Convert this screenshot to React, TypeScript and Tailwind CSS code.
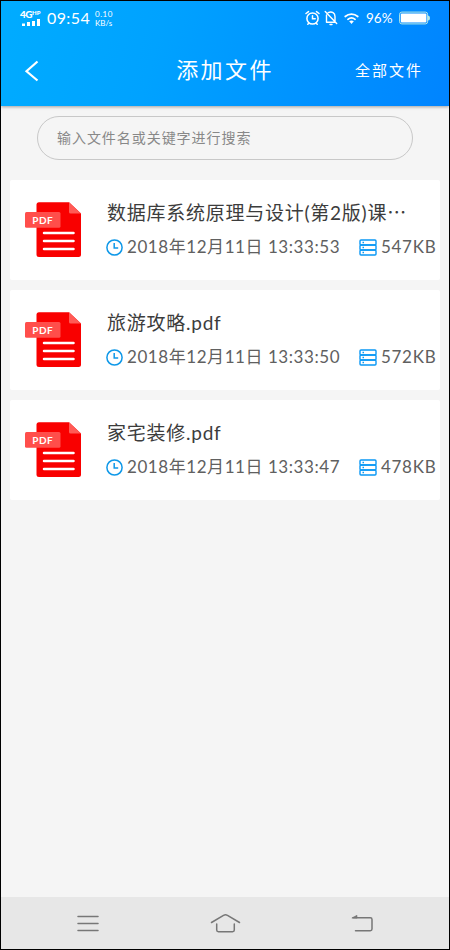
import type { ReactNode } from "react";

const files = [
  { name: "数据库系统原理与设计(第2版)课⋯", time: "13:33:53", size: "547KB" },
  { name: "旅游攻略.pdf", time: "13:33:50", size: "572KB" },
  { name: "家宅装修.pdf", time: "13:33:47", size: "478KB" },
];

function Label({ children, className }: { children: ReactNode; className: string }) {
  return <span className={`whitespace-nowrap font-['Lato','Noto_Sans_CJK_SC',sans-serif] ${className}`}>{children}</span>;
}

function StatusBar() {
  return (
    <div className="flex h-[33px] items-center pl-[19px] pr-[19px] text-white">
      <div className="flex w-[22px] flex-col">
        <div className="flex h-[8px] items-start font-['Lato',sans-serif] font-black leading-[8px]">
          <span className="text-[10px] tracking-[-0.5px]">4G</span>
          <span className="text-[6px] leading-[6px]">HP</span>
        </div>
        <svg className="ml-[1px] mt-[1px] h-[7px] w-5" viewBox="0 0 20 7" fill="currentColor">
          <path d="M1 4.500h3V7H1zM6 3h3v4H6zM11 2h3v5h-3zM16 0h3v7h-3z" />
        </svg>
      </div>
      <Label className="ml-[5px] w-[43px] text-[16px] leading-4 tracking-[0.4px]">09:54</Label>
      <div className="ml-[5px] flex flex-col font-['Lato',sans-serif] text-[8px] leading-[10px] tracking-[0.5px]">
        <span className="h-[9px]">0.10</span>
        <span className="h-[9px] tracking-normal">KB/s</span>
      </div>
      <svg className="ml-auto h-4 w-[15px]" viewBox="0 0 15 16" fill="none" stroke="currentColor" strokeWidth="1.500" strokeLinecap="round">
        <circle cx="7.5" cy="8.5" r="5.6" />
        <path d="M7.5 5.7v3h2.7M1 3.5 3.5 1.6M14 3.5l-2.5-1.9M3.8 13.2l-1 1M11.2 13.2l1 1" />
      </svg>
      <svg className="ml-1 h-4 w-[14px]" viewBox="0 0 14 16" fill="none" stroke="currentColor" strokeWidth="1.4" strokeLinecap="round" strokeLinejoin="round">
        <path d="M4.2 2.6C8 .8 11 3 11 6.5v4.2M2.5 5v7.3h8.4M1.2 1.5l11.5 12M6 14.5h2" />
      </svg>
      <svg className="ml-[6px] mt-[2px] h-[13px] w-[15px]" viewBox="0 0 15 13" fill="none" stroke="currentColor" strokeWidth="1.700" strokeLinecap="round">
        <path d="M1.2 4.5c3.7-3.2 8.9-3.2 12.6 0M3.9 7.3c2.2-1.8 5-1.8 7.2 0" />
        <path d="M5.2 9.3c1.400-1 3.200-1 4.600 0l-2.300 2.700z" fill="currentColor" stroke="none" />
      </svg>
      <Label className="ml-[7px] w-[30px] text-[13.5px] leading-4">96%</Label>
      <svg className="ml-[3px] h-[14px] w-[31px]" viewBox="0 0 31 14">
        <rect x=".6" y="1.1" width="28" height="11.8" rx="2.2" fill="none" stroke="#b9ebe5" strokeWidth="1" />
        <rect x="1.800" y="2.4" width="25.6" height="9.2" rx="1" fill="#fff" />
        <path d="M29 4.5q2 0 2 2.5t-2 2.5z" fill="#b9ebe5" />
      </svg>
    </div>
  );
}

function Header() {
  return (
    <header className="relative h-[105px] shrink-0 bg-[linear-gradient(105deg,#00acff_0%,#00a2ff_35%,#0084ff_100%)] shadow-[0_1px_3px_rgba(0,0,0,0.35)]">
      <StatusBar />
      <div className="grid h-[71px] grid-cols-[100px_1fr_100px] items-center text-white">
        <svg className="ml-[23px] mt-[2px] h-[22px] w-4" viewBox="0 0 16 22" fill="none" stroke="currentColor" strokeWidth="2.2">
          <path d="M13.5 1.5 2.5 11.3l11 9.2" />
        </svg>
        <Label className="text-center text-[22px] leading-8 tracking-[2.4px]">添加文件</Label>
        <Label className="pl-[6px] text-[15px] leading-6 tracking-[2px]">全部文件</Label>
      </div>
    </header>
  );
}

function PdfIcon() {
  return (
    <svg className="ml-[15px] h-[56px] w-[57px] shrink-0" viewBox="0 0 57 56">
      <path d="M14 .3h30L56 11.5v41a2.5 2.5 0 0 1-2.5 2.500H14a2.5 2.5 0 0 1-2.5-2.500V2.8A2.5 2.5 0 0 1 14 .3z" fill="#f90000" />
      <path d="M44 .3 56 11.5H45.5a1.5 1.5 0 0 1-1.5-1.500z" fill="#ff5a55" />
      <rect x="0" y="10" width="35.5" height="15.8" rx="1.5" fill="#ff4e4b" />
      <text x="7.2" y="21.7" fill="#fff" fontFamily="Lato, sans-serif" fontSize="10" fontWeight="700" textLength="20.5">PDF</text>
      <path d="M19 31h29.500M19 39h29.500M19 47h29.500" stroke="#fff" strokeWidth="2.5" strokeLinecap="round" />
    </svg>
  );
}

function ClockIcon() {
  return (
    <svg className="h-[17px] w-[17px] shrink-0" viewBox="0 0 17 17" fill="none" stroke="#0e98e8" strokeWidth="1.5">
      <circle cx="8.5" cy="8.5" r="7.6" />
      <path d="M8.2 4v5h4" />
    </svg>
  );
}

function StorageIcon() {
  return (
    <svg className="h-[17px] w-[18px] shrink-0" viewBox="0 0 18 17" fill="none" stroke="#0a98f5" strokeWidth="1.4">
      <rect x="1" y="1" width="16" height="5" rx="1" />
      <rect x="1" y="6" width="16" height="5" rx="1" />
      <rect x="1" y="11" width="16" height="5" rx="1" />
      <path d="M3.5 3.5H5M3.5 8.5H5M3.5 13.5H5" />
    </svg>
  );
}

function FileCard({ name, time, size }: (typeof files)[number]) {
  return (
    <li className="flex h-[100px] items-center rounded-[2px] bg-white">
      <PdfIcon />
      <div className="ml-[24px] flex min-w-0 flex-1 flex-col">
        <Label className="ml-[1px] h-8 text-[19px] leading-8 tracking-[0.75px] text-[#3c3c3c]">{name}</Label>
        <div className="mt-[2px] flex h-8 items-center">
          <ClockIcon />
          <Label className="ml-[4px] w-[232px] text-[17px] leading-6 tracking-[0.56px] text-[#606060]">
            2018年12月11日 {time}
          </Label>
          <StorageIcon />
          <Label className="ml-[4px] text-[17px] leading-6 tracking-[0.7px] text-[#606060]">{size}</Label>
        </div>
      </div>
    </li>
  );
}

function NavBar() {
  return (
    <nav className="flex h-[52px] shrink-0 items-center bg-[#e7e7e7] text-[#777]">
      <svg className="ml-[76px] h-5 w-[22px]" viewBox="0 0 22 20" fill="none" stroke="currentColor" strokeWidth="1.5" strokeLinecap="round">
        <path d="M1 3.500h20M1 10.500h20M1 17.500h20" />
      </svg>
      <svg className="ml-[111px] h-5 w-[31px]" viewBox="0 0 31 20" fill="none" stroke="currentColor" strokeWidth="1.5" strokeLinecap="round" strokeLinejoin="round">
        <path d="M1.5 9.5 13.5 2.3q2-1 4 0l12 7.2M6.7 11v6q0 1.7 1.7 1.7h14.2q1.7 0 1.7-1.700v-6" />
      </svg>
      <svg className="ml-[110px] h-5 w-[23px]" viewBox="0 0 23 20" fill="none" stroke="currentColor" strokeWidth="1.5" strokeLinecap="round" strokeLinejoin="round">
        <path d="M2 4.8h17.300q1.700 0 1.700 1.700v9.600q0 1.700-1.700 1.700H4.500" />
        <path d="M1.200 4.800 6 2.300v2.500z" fill="currentColor" strokeWidth=".6" />
      </svg>
    </nav>
  );
}

export default function App() {
  return (
    <div className="flex h-[950px] w-[450px] flex-col overflow-hidden border border-black bg-[#f5f5f5]">
      <Header />
      <main className="flex-1">
        <div className="ml-[36px] mt-[10px] flex h-[44px] w-[376px] items-center rounded-full border border-[#c8c8c8] pl-[19px]">
          <Label className="text-[14px] leading-5 tracking-[0.95px] text-[#888]">输入文件名或关键字进行搜索</Label>
        </div>
        <ul className="mx-[9px] mt-[20px] flex flex-col gap-[10px]">
          {files.map((file) => (
            <FileCard key={file.time} {...file} />
          ))}
        </ul>
      </main>
      <NavBar />
    </div>
  );
}
